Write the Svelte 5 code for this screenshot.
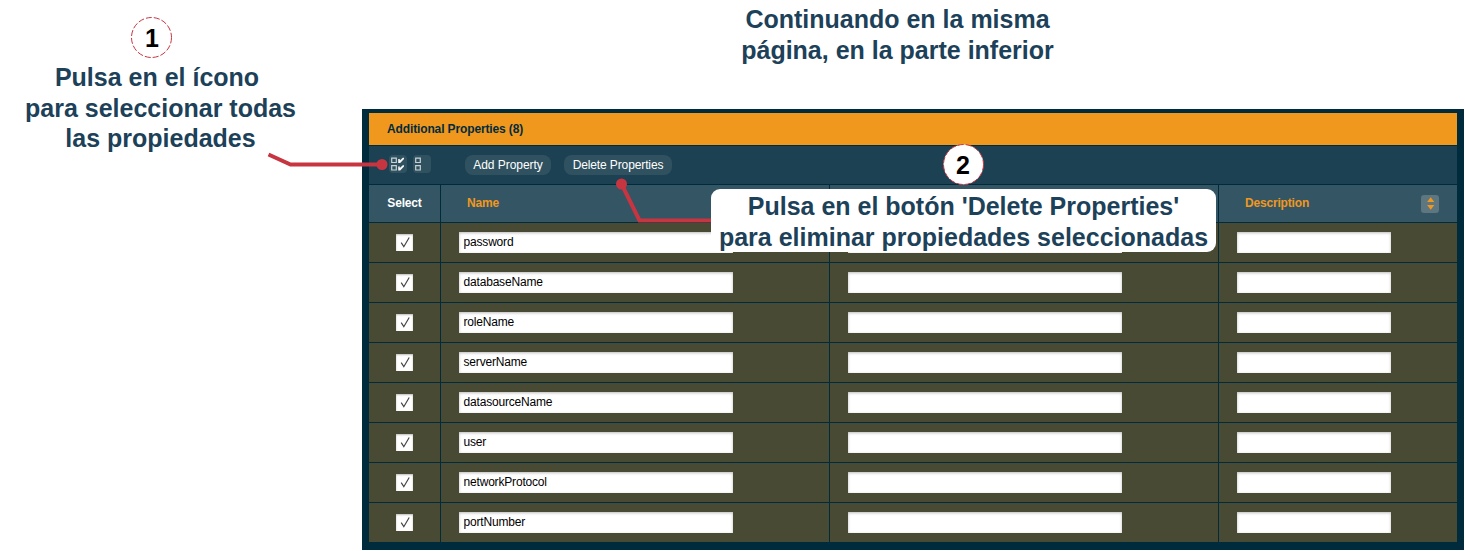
<script>
  const properties = ['password', 'databaseName', 'roleName', 'serverName', 'datasourceName', 'user', 'networkProtocol', 'portNumber'];
</script>

<main>
  <aside>
    <span class="step"><svg viewBox="0 0 42 42"><circle cx="20.500" cy="20.500" r="20" /></svg>1</span>
    <p class="note">Pulsa en el ícono&nbsp;<br />para seleccionar todas<br />las propiedades</p>
  </aside>

  <div class="content">
    <p class="note heading">Continuando en la misma<br />página, en la parte inferior</p>

    <section class="panel">
      <header class="title">Additional Properties (8)</header>
      <div class="toolbar">
        <span class="tool">
          <svg viewBox="0 0 18 18">
            <path class="box" d="M2.700 3.200h4.600v4.300h-4.600zM2.700 10.700h4.600v4.300h-4.600z" />
            <path class="tick" d="M9.200 4h1.600v1.600l3-2.900h1.200v1.300l-3.800 4h-2zM9.200 11.500h1.600v1.600l3-2.900h1.200v1.300l-3.800 4h-2z" />
          </svg>
        </span>
        <span class="tool second">
          <svg viewBox="0 0 18 18"><path class="box" d="M2.700 3.200h4.600v4.300h-4.600zM2.700 10.700h4.600v4.300h-4.600z" /></svg>
        </span>
        <button class="add">Add Property</button>
        <button class="delete">Delete Properties</button>
      </div>
      <div class="row head">
        <div class="select">Select</div>
        <div>Name</div>
        <div></div>
        <div class="description">Description
          <span class="sort"><svg viewBox="0 0 18 18"><path d="M9.700 2.300L13.300 7H6.100zM9.700 14.700L13.300 10H6.100z" /></svg></span>
        </div>
      </div>
      {#each properties as name}
        <div class="row">
          <div class="select">
            <span class="check"><svg viewBox="0 0 17 17"><path d="M5.200 8.700l2.600 4L13.200 3.500" /></svg></span>
          </div>
          <div><span class="field">{name}</span></div>
          <div><span class="field"></span></div>
          <div><span class="field short"></span></div>
        </div>
      {/each}
    </section>
  </div>

  <svg class="leaders" viewBox="0 0 1465 551">
    <path d="M268.500 154.500L290.500 164.500H382" />
    <circle cx="382" cy="164.500" r="5.500" />
    <path d="M621.500 184L639.500 220.500H712" />
    <circle cx="621.500" cy="184" r="5.500" />
  </svg>
  <p class="note callout">Pulsa en el botón 'Delete Properties'<br />para eliminar propiedades seleccionadas</p>
  <span class="step two"><svg viewBox="0 0 42 42"><circle cx="21.500" cy="21.500" r="20" /></svg>2</span>
</main>

<style>
  :global(body) { margin: 0; background: #fff; }
  main {
    position: relative;
    display: grid;
    grid-template-columns: 362px 1102px;
    width: 1465px;
    height: 551px;
    overflow: hidden;
    font-family: "Liberation Sans", Arial, sans-serif;
    font-size: 12px;
  }
  aside { display: flex; flex-direction: column; align-items: flex-start; padding-top: 17px; }
  .note {
    margin: 0;
    font-size: 25px;
    line-height: 30.6px;
    font-weight: bold;
    color: #1c4159;
    text-align: center;
    white-space: nowrap;
  }
  aside .note { width: 321px; margin-top: 3px; }
  .step {
    position: relative;
    width: 42px;
    height: 42px;
    margin-left: 131px;
    line-height: 43px;
    text-align: center;
    font-size: 25px;
    font-weight: bold;
    color: #000;
    isolation: isolate;
  }
  .step svg { position: absolute; inset: 0; z-index: -1; }
  .step circle { fill: #fff; stroke: #c83540; stroke-width: 1; stroke-dasharray: 6 2; }
  .step.two { position: absolute; left: 942px; top: 143px; margin: 0; line-height: 44px; }
  .content { display: flex; flex-direction: column; }
  .heading { height: 105px; padding-top: 4px; width: 1071px; }
  .panel { box-sizing: border-box; height: 441px; padding: 4px 7px 8px; background: #002b3c; }
  .title {
    height: 32px;
    padding-left: 18px;
    line-height: 32px;
    font-weight: bold;
    letter-spacing: -0.13px;
    color: #002b3c;
    background: #f0981e;
  }
  .toolbar { display: flex; align-items: flex-start; height: 29px; margin-top: 1px; padding: 9px 0 0 20px; background: #1c4152; }
  .tool { width: 18px; height: 18px; border-radius: 4px; background: #305260; }
  .second { margin-left: 6px; }
  .tool svg, .check svg, .sort svg { display: block; }
  .box { fill: none; stroke: #c9d1d5; stroke-width: 1.2; }
  .tick { fill: #f4f6f7; }
  button {
    height: 20px;
    padding: 0;
    border: 0;
    border-radius: 8px;
    background: #305260;
    color: #fff;
    font: 12px/20px "Liberation Sans", Arial, sans-serif;
    letter-spacing: -0.12px;
  }
  .add { width: 86px; margin-left: 34px; letter-spacing: -0.05px; }
  .delete { width: 108px; margin-left: 13px; }
  .row { display: grid; grid-template-columns: 71px 388px 388px 238px; column-gap: 1px; height: 39px; margin-top: 1px; }
  .row > div { display: flex; align-items: flex-start; padding: 9px 0 0 18px; background: #484a34; }
  .row > .select { justify-content: center; padding: 11px 0 0; }
  .head { height: 37px; }
  .head > div { padding: 0 18px 2px 26px; align-items: center; background: #335564; color: #f0981e; font-weight: bold; letter-spacing: -0.18px; }
  .head > .select { padding: 0 0 2px; color: #fff; }
  .head .description { justify-content: space-between; }
  .sort { width: 18px; height: 18px; margin-top: 3px; border-radius: 3px; background: #5d7680; }
  .sort path { fill: #f0981e; }
  .check { width: 17px; height: 17px; background: #fff; box-shadow: inset 0 1px 2px #bbb; }
  .check path { fill: none; stroke: #454545; stroke-width: 1.2; }
  .field {
    box-sizing: border-box;
    width: 274px;
    height: 21px;
    padding-left: 4.5px;
    line-height: 21px;
    letter-spacing: -0.18px;
    color: #000;
    background: #fff;
    box-shadow: inset 0 1px 3px #bbb;
  }
  .short { width: 154px; }
  .leaders { position: absolute; inset: 0; width: 1465px; height: 551px; }
  .leaders path { fill: none; stroke: #c73540; stroke-width: 4; }
  .leaders circle { fill: #c73540; }
  .callout {
    position: absolute;
    left: 711px;
    top: 189px;
    width: 505px;
    height: 61px;
    padding-top: 2px;
    border-radius: 9px;
    background: #fff;
  }
</style>
